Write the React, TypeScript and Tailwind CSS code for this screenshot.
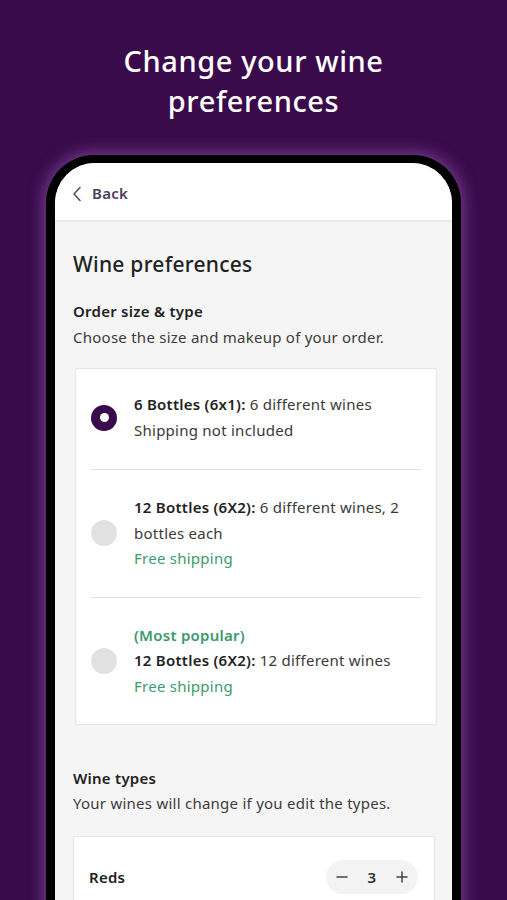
import React from 'react';

const font = { fontFamily: '"Noto Sans", "Open Sans", sans-serif' };

const options = [
  { selected: true, popular: false, bold: '6 Bottles (6x1):', rest: ' 6 different wines', note: 'Shipping not included', free: false },
  { selected: false, popular: false, bold: '12 Bottles (6X2):', rest: ' 6 different wines, 2 bottles each', note: 'Free shipping', free: true },
  { selected: false, popular: true, bold: '12 Bottles (6X2):', rest: ' 12 different wines', note: 'Free shipping', free: true },
];

const Radio: React.FC<{ on: boolean }> = ({ on }) =>
  on ? (
    <div className="w-[26px] h-[26px] rounded-full bg-[#3a0b4b] flex items-center justify-center shrink-0">
      <div className="w-[9px] h-[9px] rounded-full bg-white" />
    </div>
  ) : (
    <div className="w-[26px] h-[26px] rounded-full bg-[#e1e1e1] shrink-0" />
  );

export default function App() {
  return (
    <div className="w-[507px] h-[900px] overflow-hidden bg-[#3a0b4b]" style={font}>
      <h1 className="pt-[41px] text-center text-white text-[29px] leading-[40px] font-medium tracking-[0.6px]">
        Change your wine
        <br />
        preferences
      </h1>

      <div className="mt-[34px] mx-[46px] h-[800px] rounded-t-[48px] bg-black px-[9px] pt-[8px] shadow-[0_0_14px_4px_rgba(150,90,180,0.55)]">
        <div className="h-full rounded-t-[40px] overflow-hidden bg-[#f5f5f5] tracking-[0.25px]">
          <div className="h-[59px] bg-white border-b-2 border-[#e9e9e9] flex items-center pl-[17px] pt-[4px]">
            <svg width="10" height="16" viewBox="0 0 10 16" fill="none" stroke="#555" strokeWidth="1.6" strokeLinecap="round" strokeLinejoin="round">
              <path d="M8 1.5 L2 8 L8 14.5" />
            </svg>
            <span className="ml-[10px] text-[15px] font-semibold text-[#4b3c5e]">Back</span>
          </div>

          <div className="px-[18px]">
            <h2 className="mt-[28px] text-[21px] leading-[28px] font-medium text-[#222]">Wine preferences</h2>
            <h3 className="mt-[23px] text-[15px] leading-[20px] font-semibold text-[#222]">Order size &amp; type</h3>
            <p className="mt-[6px] text-[15px] leading-[20px] text-[#3c3c3c]">Choose the size and makeup of your order.</p>

            <div className="mt-[21px] ml-[2px] w-[362px] bg-white border border-[#e3e3e3] rounded-[2px] px-[15px]">
              {options.map((o, i) => (
                <div
                  key={i}
                  className={`flex items-center gap-[17px] ${i === 0 ? 'pt-[23px] pb-[26px]' : 'py-[25px]'} ${i < options.length - 1 ? 'border-b border-[#e2e2e2]' : ''}`}
                >
                  <Radio on={o.selected} />
                  <div className="text-[15px] leading-[25.5px] text-[#3a3a3a]">
                    {o.popular && <div className="font-semibold text-[#3d9a6d]">(Most popular)</div>}
                    <div>
                      <span className="font-semibold text-[#222]">{o.bold}</span>
                      {o.rest}
                    </div>
                    <div className={o.free ? 'text-[#3d9a6d]' : ''}>{o.note}</div>
                  </div>
                </div>
              ))}
            </div>

            <h3 className="mt-[43px] text-[15px] leading-[20px] font-semibold text-[#222]">Wine types</h3>
            <p className="mt-[5px] text-[15px] leading-[20px] text-[#3c3c3c]">Your wines will change if you edit the types.</p>

            <div className="mt-[23px] w-[362px] bg-white border border-[#e3e3e3] rounded-[2px] pl-[15px] pr-[16px] pt-[23px] pb-[20px]">
              <div className="flex items-center justify-between">
                <span className="text-[15px] font-semibold text-[#222]">Reds</span>
                <div className="w-[92px] h-[34px] rounded-full bg-[#f3f3f3] flex items-center justify-between px-[10px] text-[#333]">
                  <svg width="12" height="12" viewBox="0 0 12 12" stroke="#444" strokeWidth="1.5" strokeLinecap="round">
                    <path d="M1 6 H11" />
                  </svg>
                  <span className="text-[15px] font-semibold">3</span>
                  <svg width="12" height="12" viewBox="0 0 12 12" stroke="#444" strokeWidth="1.5" strokeLinecap="round">
                    <path d="M1 6 H11 M6 1 V11" />
                  </svg>
                </div>
              </div>
            </div>
          </div>
        </div>
      </div>
    </div>
  );
}
